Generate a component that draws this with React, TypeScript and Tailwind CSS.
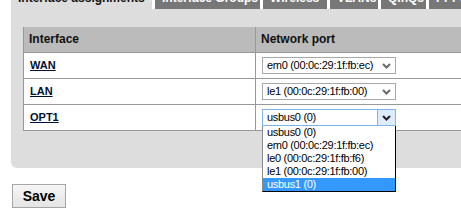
import React from 'react'

const TABS: { label: string; w: string; active?: boolean }[] = [
  { label: 'Interface assignments', w: 'w-[141px]', active: true },
  { label: 'Interface Groups', w: 'w-[105px]' },
  { label: 'Wireless', w: 'w-[64px]' },
  { label: 'VLANs', w: 'w-[48px]' },
  { label: 'QinQs', w: 'w-[45px]' },
  { label: 'PPPs', w: 'w-[60px]' },
]

const OPTIONS = [
  'usbus0 (0)',
  'em0 (00:0c:29:1f:fb:ec)',
  'le0 (00:0c:29:1f:fb:f6)',
  'le1 (00:0c:29:1f:fb:00)',
  'usbus1 (0)',
]

function Chevron({ color }: { color: string }) {
  return (
    <svg width="9" height="6" viewBox="0 0 9 6" className="block">
      <path d="M1 1 L4.5 4.5 L8 1" fill="none" stroke={color} strokeWidth="2" />
    </svg>
  )
}

function FakeSelect({ value, open }: { value: string; open?: boolean }) {
  return (
    <div className="relative w-[134px]">
      <div
        className={`flex h-[17px] items-stretch border bg-white ${
          open ? 'border-[#7eb4ea]' : 'border-[#a9a9a9]'
        }`}
      >
        <span className="flex-1 pl-[4px] text-[11px] leading-[15px] tracking-[-0.3px] text-black whitespace-nowrap">
          {value}
        </span>
        <span
          className={`flex w-[18px] items-center justify-center ${
            open ? 'bg-[#dcecfc] border-l border-[#7eb4ea]' : ''
          }`}
        >
          <Chevron color={open ? '#222' : '#6a6a6a'} />
        </span>
      </div>
      {open && (
        <div className="absolute left-0 top-full z-10 w-[134px] border border-l-[#8a8a8a] border-t-0 border-r-black border-b-black bg-white">
          {OPTIONS.map((o, i) => (
            <div
              key={o}
              className={`h-[13px] pl-[4px] text-[11px] leading-[13px] tracking-[-0.3px] whitespace-nowrap ${
                i === OPTIONS.length - 1 ? 'bg-[#3399ff] text-white' : 'text-black'
              }`}
            >
              {o}
            </div>
          ))}
        </div>
      )}
    </div>
  )
}

const ROWS = [
  { name: 'WAN', port: 'em0 (00:0c:29:1f:fb:ec)' },
  { name: 'LAN', port: 'le1 (00:0c:29:1f:fb:00)' },
  { name: 'OPT1', port: 'usbus0 (0)', open: true },
]

export default function App() {
  return (
    <div className="w-[461px] h-[221px] overflow-hidden bg-white font-['Liberation_Sans',Arial,sans-serif]">
      <div className="pl-[11px] w-[520px]">
        {/* tab strip, cut off at the top of the shot */}
        <div className="-mt-[12px] flex h-[21px] gap-[3px]">
          {TABS.map((t) => (
            <div
              key={t.label}
              className={`${t.w} shrink-0 overflow-hidden pl-[7px] text-[12px] font-bold leading-[20px] whitespace-nowrap ${
                t.active ? 'bg-[#dddddd] text-[#111]' : 'bg-[#777777] text-white'
              }`}
            >
              {t.label}
            </div>
          ))}
        </div>

        {/* panel */}
        <div className="bg-[#dddddd] rounded-bl-[6px] pt-[18px] pl-[12px] pb-[37px]">
          <div className="border-l border-[#999]">
            <div className="flex h-[26px] border-b border-[#999] bg-[#bbbbbb]">
              <div className="w-[232px] border-r border-[#999] pl-[5px] text-[12px] font-bold leading-[25px] text-[#111]">
                Interface
              </div>
              <div className="flex-1 pl-[5px] text-[12px] font-bold leading-[25px] text-[#111]">
                Network port
              </div>
            </div>
            {ROWS.map((r) => (
              <div key={r.name} className="flex h-[26px] border-b border-[#999] bg-white">
                <div className="w-[232px] border-r border-[#999] pl-[6px] text-[11px] font-bold leading-[25px]">
                  <a className="text-[#001133] underline">{r.name}</a>
                </div>
                <div className="flex-1 pl-[6px] pt-[4px]">
                  <FakeSelect value={r.port} open={r.open} />
                </div>
              </div>
            ))}
          </div>
        </div>
      </div>

      <button className="ml-[12px] mt-[16px] h-[24px] w-[54px] border border-[#a5a5a5] bg-gradient-to-b from-[#f6f6f6] to-[#e4e4e4] text-[14px] font-bold text-black">
        Save
      </button>
    </div>
  )
}
